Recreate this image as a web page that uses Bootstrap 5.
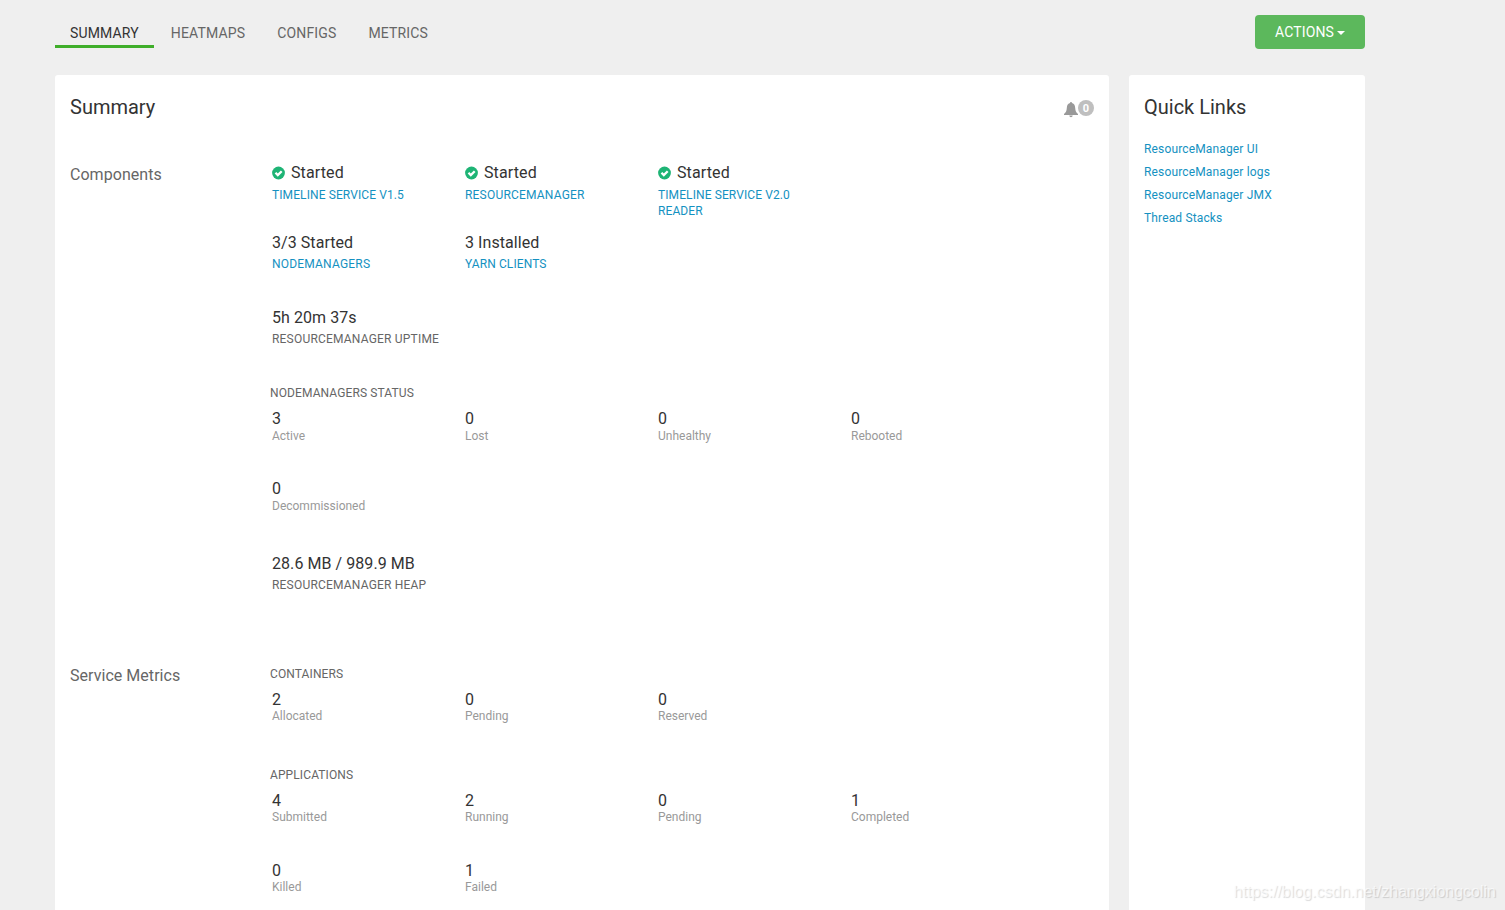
<!DOCTYPE html>
<html lang="en">
<head>
<meta charset="utf-8">
<meta name="viewport" content="width=device-width, initial-scale=1">
<title>YARN Summary</title>
<link href="https://cdn.jsdelivr.net/npm/bootstrap@5.3.0/dist/css/bootstrap.min.css" rel="stylesheet">
<style>
body{background:#efefef;font-family:Roboto,sans-serif;font-size:14px;line-height:20px;color:#333;height:910px;overflow:hidden}
.page{width:1310px;margin-left:55px;height:910px}
.topbar{height:75px;padding-top:15px}
.service-tabs{gap:2px;padding-top:3px}
.service-tabs .nav-link{color:#666;padding:5px 15px 2px;border-bottom:3px solid transparent;line-height:20px;letter-spacing:.15px}
.service-tabs .nav-link.active{color:#333;border-color:#3fae2a}
.btn-actions{--bs-btn-bg:#5cb85c;--bs-btn-color:#fff;--bs-btn-hover-bg:#4cae4c;--bs-btn-hover-color:#fff;--bs-btn-font-size:14px;width:110px;height:34px;border:0;border-radius:4px;padding:0;line-height:34px;letter-spacing:.12px}
.btn-actions::after{margin-left:3px;border-top-width:4px;border-left-width:4px;border-right-width:4px;vertical-align:2px}
.panel{background:#fff;border-radius:3px 3px 0 0;padding:20px 15px 0;height:835px}
.panel h1{font-size:20px;line-height:24px;font-weight:400;margin:0}
.panel-main{width:1054px}
.panel-side{width:236px}
.alerts-count{color:#999;padding-top:5px}
.count-dot{width:16px;height:16px;border-radius:50%;background:#bfbfbf;color:#fff;font-size:11px;font-weight:700;line-height:17px;text-align:center}
.section-name{width:200px;font-size:16px;line-height:22px;color:#666;padding-top:3px;letter-spacing:.04px}
.metric-grid{display:grid;grid-template-columns:repeat(4,193px);grid-auto-rows:70px;padding-left:2px}
.value{font-size:16px;line-height:24px;height:22px;letter-spacing:.06px}
.state{display:flex;align-items:center;gap:5px;letter-spacing:.12px}
.state svg{margin-top:1px}
.state span{margin-top:2px}
.caption{font-size:12px;line-height:16px;color:#666;margin-top:3px;letter-spacing:.2px}
.caption.tight{letter-spacing:.1px}
.metric-grid .unit{font-size:12px;line-height:16px;color:#999;margin-top:-1px}
.service-metrics .metric-grid .unit{margin-top:-2px}
.group-title{font-size:12px;line-height:16px;color:#666;margin-bottom:6px;letter-spacing:.11px}
a{color:#1491c1;text-decoration:none}
.state + .caption{margin-top:4px}
.quick a{font-size:12px;line-height:23px;letter-spacing:.15px}
.watermark{position:absolute;right:9px;bottom:8px;font:16px/20px "Liberation Sans",sans-serif;color:rgba(255,255,255,.65);text-shadow:1px 1px 1px rgba(0,0,0,.15)}
</style>
</head>
<body>
<svg class="d-none">
<symbol id="ok" viewBox="0 0 14 14"><circle cx="6.500" cy="7" r="6.400" fill="#1eb475"/><path d="M3.500 6.800l2.300 2.300 3.900-3.900" fill="none" stroke="#fff" stroke-width="2.300"/></symbol>
</svg>
<div class="page">
  <header class="topbar d-flex justify-content-between align-items-start">
    <nav class="nav service-tabs">
      <a class="nav-link active" href="#">SUMMARY</a><a class="nav-link" href="#">HEATMAPS</a><a class="nav-link" href="#">CONFIGS</a><a class="nav-link" href="#">METRICS</a>
    </nav>
    <button class="btn btn-actions dropdown-toggle" type="button">ACTIONS</button>
  </header>
  <div class="d-flex justify-content-between">
    <main class="panel panel-main">
      <div class="d-flex justify-content-between">
        <h1>Summary</h1>
        <div class="alerts-count d-flex">
          <svg width="14" height="17" viewBox="0 0 14 17" style="margin-top:1px"><path fill="#999" d="M6 2.1C6 .6 8 .6 8 2.1 10.400 2.700 11 4.500 11.200 7c.2 3 .8 4.400 2.800 6v1H0v-1c2-1.600 2.600-3 2.800-6C3 4.500 3.600 2.700 6 2.100zM5.300 14.600h3.400c-.2 2.300-3.200 2.300-3.400 0z"/></svg>
          <span class="count-dot">0</span>
        </div>
      </div>
      <section class="d-flex" style="margin-top:42px;height:503px">
        <div class="section-name">Components</div>
        <div>
          <div class="metric-grid">
            <div><div class="value state"><svg width="14" height="14"><use href="#ok"/></svg><span>Started</span></div><div class="caption tight"><a href="#">TIMELINE SERVICE V1.5</a></div></div>
            <div><div class="value state"><svg width="14" height="14"><use href="#ok"/></svg><span>Started</span></div><div class="caption"><a href="#">RESOURCEMANAGER</a></div></div>
            <div><div class="value state"><svg width="14" height="14"><use href="#ok"/></svg><span>Started</span></div><div class="caption tight pe-5"><a href="#">TIMELINE SERVICE V2.0 READER</a></div></div>
            <div></div>
            <div><div class="value">3/3 Started</div><div class="caption"><a href="#">NODEMANAGERS</a></div></div>
            <div><div class="value">3 Installed</div><div class="caption tight"><a href="#">YARN CLIENTS</a></div></div>
          </div>
          <div class="metric-grid" style="margin-top:5px;height:79px"><div><div class="value">5h 20m 37s</div><div class="caption">RESOURCEMANAGER UPTIME</div></div></div>
          <div class="group-title">NODEMANAGERS STATUS</div>
          <div class="metric-grid">
            <div><div class="value">3</div><div class="unit">Active</div></div>
            <div><div class="value">0</div><div class="unit">Lost</div></div>
            <div><div class="value">0</div><div class="unit">Unhealthy</div></div>
            <div><div class="value">0</div><div class="unit">Rebooted</div></div>
            <div><div class="value">0</div><div class="unit">Decommissioned</div></div>
          </div>
          <div class="metric-grid" style="margin-top:5px"><div><div class="value">28.6 MB / 989.9 MB</div><div class="caption">RESOURCEMANAGER HEAP</div></div></div>
        </div>
      </section>
      <section class="d-flex service-metrics">
        <div class="section-name" style="padding-top:1px">Service Metrics</div>
        <div style="padding-top:2px">
          <div class="group-title">CONTAINERS</div>
          <div class="metric-grid" style="height:79px">
            <div><div class="value">2</div><div class="unit">Allocated</div></div>
            <div><div class="value">0</div><div class="unit">Pending</div></div>
            <div><div class="value">0</div><div class="unit">Reserved</div></div>
          </div>
          <div class="group-title">APPLICATIONS</div>
          <div class="metric-grid">
            <div><div class="value">4</div><div class="unit">Submitted</div></div>
            <div><div class="value">2</div><div class="unit">Running</div></div>
            <div><div class="value">0</div><div class="unit">Pending</div></div>
            <div><div class="value">1</div><div class="unit">Completed</div></div>
            <div><div class="value">0</div><div class="unit">Killed</div></div>
            <div><div class="value">1</div><div class="unit">Failed</div></div>
          </div>
        </div>
      </section>
    </main>
    <aside class="panel panel-side">
      <h1>Quick Links</h1>
      <div class="quick d-flex flex-column" style="margin-top:19px">
        <a href="#">ResourceManager UI</a><a href="#">ResourceManager logs</a><a href="#">ResourceManager JMX</a><a href="#">Thread Stacks</a>
      </div>
    </aside>
  </div>
</div>
<div class="watermark">https://blog.csdn.net/zhangxiongcolin</div>
<script src="https://cdn.jsdelivr.net/npm/bootstrap@5.3.0/dist/js/bootstrap.bundle.min.js"></script>
</body>
</html>
